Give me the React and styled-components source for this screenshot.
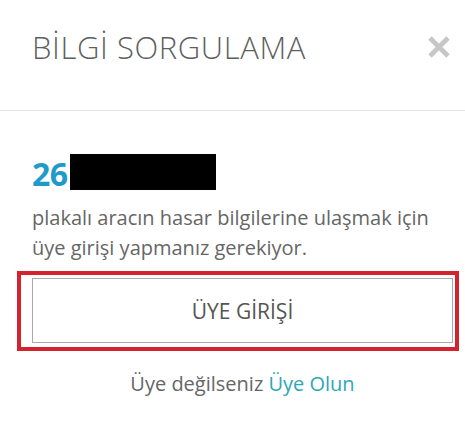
import React from "react";
import styled, { createGlobalStyle } from "styled-components";

const Global = createGlobalStyle`
  html, body { margin: 0; padding: 0; background: #fff; }
  body { font-family: "Open Sans", "Noto Sans", sans-serif; }
`;

const Modal = styled.div`
  width: 465px;
  height: 445px;
  background: #fff;
  box-sizing: border-box;
`;

const Header = styled.div`
  display: flex;
  align-items: flex-start;
  justify-content: space-between;
  padding: 27px 14px 43px 32px;
  border-bottom: 1px solid #e5e5e5;
`;

const Title = styled.h4`
  margin: 0;
  font-size: 31px;
  line-height: 40px;
  font-weight: 300;
  letter-spacing: 0.6px;
  color: #5f5f5f;
`;

const Close = styled.button`
  border: 0;
  background: none;
  padding: 0;
  margin-top: 8px;
  width: 24px;
  height: 24px;
  cursor: pointer;
  display: flex;
`;

const Body = styled.div`
  padding: 43px 12px 0 32px;
`;

const Plate = styled.div`
  display: flex;
  align-items: flex-end;
  height: 36px;
`;

const PlateCode = styled.span`
  font-size: 32px;
  font-weight: 700;
  line-height: 32px;
  color: #1f9bc9;
  letter-spacing: -0.5px;
`;

const Redacted = styled.span`
  display: block;
  width: 146px;
  height: 36px;
  background: #000;
  margin-left: 2px;
`;

const Text = styled.p`
  margin: 13px 0 0 0;
  font-size: 20px;
  line-height: 30px;
  color: #666;
`;

const Highlight = styled.div`
  margin: 8px -6px 0 -15px;
  border: 4px solid #d2232f;
  padding: 3px 2px 4px 11px;
`;

const LoginButton = styled.button`
  display: block;
  width: 100%;
  height: 65px;
  background: #fff;
  border: 1px solid #a9a9a9;
  font-family: inherit;
  font-size: 21px;
  color: #555;
  cursor: pointer;
`;

const Footer = styled.p`
  margin: 19px 0 0 0;
  text-align: center;
  font-size: 20px;
  line-height: 28px;
  color: #666;
`;

const Link = styled.a`
  color: #2ea6b8;
  text-decoration: none;
`;

export default function App() {
  return (
    <>
      <Global />
      <Modal>
        <Header>
          <Title>BİLGİ SORGULAMA</Title>
          <Close aria-label="Kapat">
            <svg width="24" height="24" viewBox="0 0 24 24">
              <path
                d="M3 3 L21 21 M21 3 L3 21"
                stroke="#c6c6c6"
                strokeWidth="4.6"
                strokeLinecap="butt"
              />
            </svg>
          </Close>
        </Header>
        <Body>
          <Plate>
            <PlateCode>26</PlateCode>
            <Redacted />
          </Plate>
          <Text>
            plakalı aracın hasar bilgilerine ulaşmak için üye girişi yapmanız gerekiyor.
          </Text>
          <Highlight>
            <LoginButton>ÜYE GİRİŞİ</LoginButton>
          </Highlight>
          <Footer>
            Üye değilseniz <Link href="#">Üye Olun</Link>
          </Footer>
        </Body>
      </Modal>
    </>
  );
}
